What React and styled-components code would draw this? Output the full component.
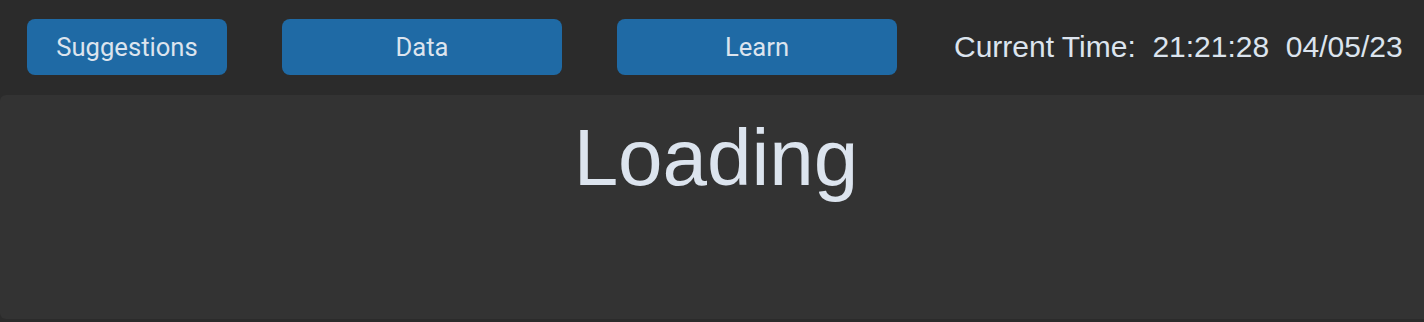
import React from "react";
import styled, { createGlobalStyle } from "styled-components";

const Global = createGlobalStyle`
  html, body {
    margin: 0;
    padding: 0;
    background: #2b2b2b;
    overflow: hidden;
  }
`;

const Window = styled.div`
  width: 1424px;
  height: 322px;
  display: flex;
  flex-direction: column;
  background: #2b2b2b;
`;

const TopBar = styled.div`
  display: flex;
  align-items: center;
  height: 56px;
  padding: 19px 0 0 27px;
  gap: 55px;
`;

const NavButton = styled.button`
  width: ${(p) => p.$w}px;
  height: 56px;
  border: none;
  border-radius: 8px;
  background: #1f6aa5;
  color: #dce4ee;
  font-family: Roboto, "Liberation Sans", sans-serif;
  font-size: 25.6px;
  padding: 0;
  cursor: pointer;
`;

const Clock = styled.div`
  margin-left: 2px;
  color: #dce4ee;
  font-family: "Liberation Sans", Arial, sans-serif;
  font-size: 30px;
  white-space: pre;
  line-height: 1;
`;

const Panel = styled.div`
  margin-top: 20px;
  width: 1432px;
  height: 224px;
  background: #333333;
  border-radius: 6px;
  display: flex;
  justify-content: center;
  align-items: flex-start;
`;

const LoadingText = styled.div`
  padding-top: 23px;
  color: #dce4ee;
  font-family: "Liberation Sans", Arial, sans-serif;
  font-size: 80px;
  line-height: 1;
`;

export default function App() {
  return (
    <>
      <Global />
      <Window>
        <TopBar>
          <NavButton $w={200}>Suggestions</NavButton>
          <NavButton $w={280}>Data</NavButton>
          <NavButton $w={280}>Learn</NavButton>
          <Clock>{"Current Time:  21:21:28  04/05/23"}</Clock>
        </TopBar>
        <Panel>
          <LoadingText>Loading</LoadingText>
        </Panel>
      </Window>
    </>
  );
}
